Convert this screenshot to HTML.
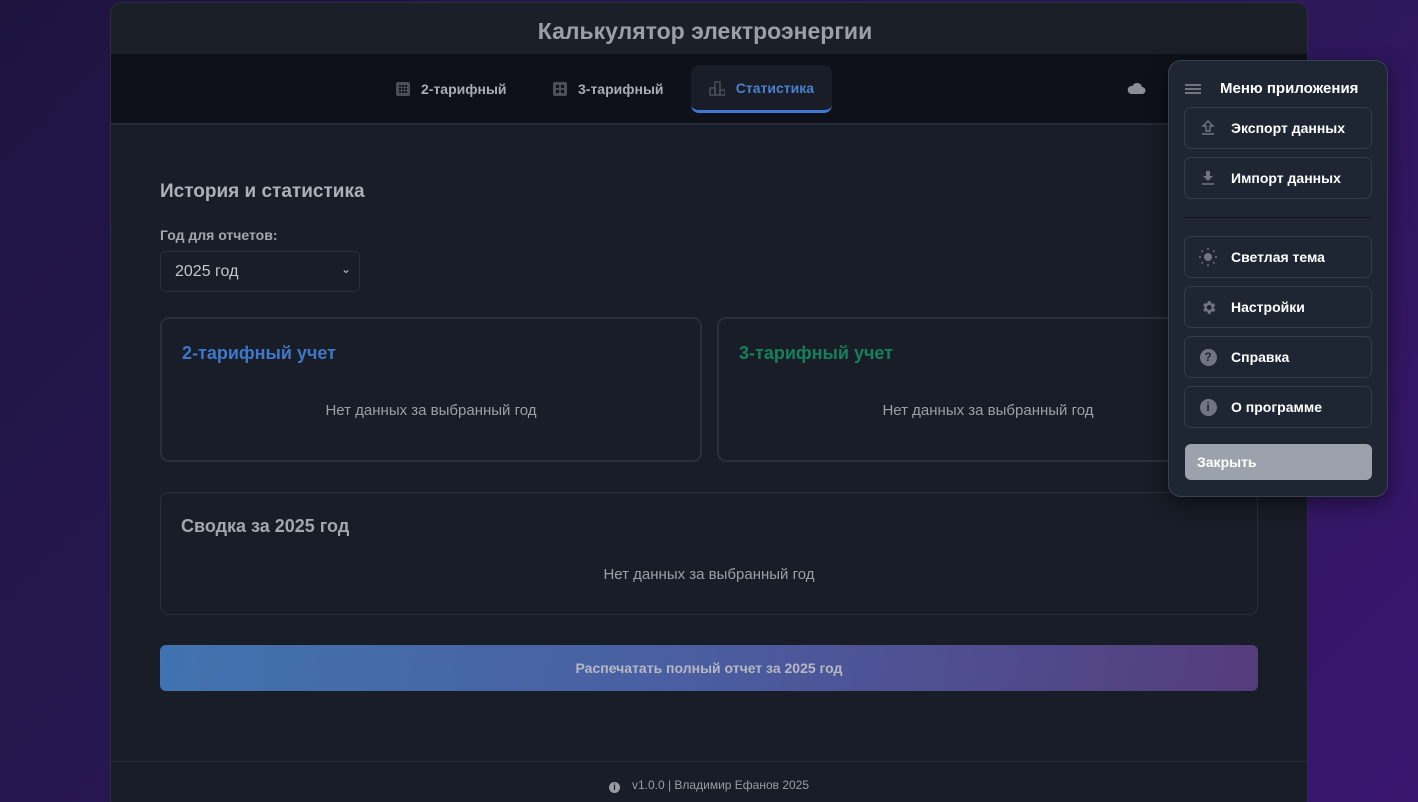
<!DOCTYPE html>
<html><head><meta charset="utf-8"><style>
*{box-sizing:border-box;margin:0;padding:0}
html,body{width:1418px;height:802px;overflow:hidden}
body{font-family:"Liberation Sans","Noto Sans CJK SC",sans-serif;background:linear-gradient(135deg,#1e1440 0%,#2a1856 50%,#3a1670 100%);position:relative}
.app{position:absolute;left:110px;top:2px;width:1198px;height:810px;background:#181d27;border:1px solid #2a303c;border-radius:12px;overflow:hidden}
.hdr{height:51px;background:#1b1f27;text-align:center;font-size:23px;font-weight:bold;color:#9ca0a6;line-height:56px;padding-right:8px}
.nav{height:71px;background:#0e1119;border-bottom:2px solid #252a35;position:relative}
.tab{position:absolute;top:11px;height:48px;display:flex;align-items:center;font-size:14px;font-weight:bold;color:#a9adb5}
.tab svg{margin-right:11px}
.act{background:#181d27;border-radius:8px;border-bottom:3px solid #3f7ad0;color:#4b80cf;padding:0 18px}
h2{position:absolute;left:49px;top:178px;font-size:19px;color:#aeb1b6}
.lbl{position:absolute;left:49px;top:224px;font-size:14px;font-weight:bold;color:#a4a7ac}
.sel{position:absolute;left:49px;top:248px;width:200px;height:41px;border:1px solid #2b313c;border-radius:5px;font-size:16px;color:#c4c7cb;padding:11px 14px;background:#181d27}
.sel span{position:absolute;right:8px;top:10px;font-size:12px}
.card{position:absolute;border:2px solid #2a303b;border-radius:9px}
.card h3{position:absolute;left:20px;top:24px;font-size:18px}
.nd{position:absolute;left:0;right:0;text-align:center;font-size:15px;color:#9ca0a6}
.btn{position:absolute;left:49px;top:642px;width:1098px;height:46px;border-radius:6px;background:linear-gradient(100deg,#4173b0,#4a5da0 50%,#553c7c);text-align:center;line-height:46px;font-size:14px;font-weight:bold;color:#b6b8c4}
.foot{position:absolute;left:0;right:0;top:758px;border-top:1px solid #262b36;text-align:center;padding-top:16px;font-size:12px;color:#9a9ea4}
.menu{position:absolute;left:1168px;top:60px;width:220px;height:437px;background:#1f2633;border:1px solid #3a4250;border-radius:13px;box-shadow:0 6px 20px rgba(0,0,0,.5)}
.mt{position:absolute;left:16px;top:19px;display:flex;align-items:center;font-size:15px;font-weight:bold;color:#fff}
.mi{position:absolute;left:15px;width:188px;height:42px;border:1px solid #343c4a;border-radius:7px;display:flex;align-items:center;font-size:14px;font-weight:bold;color:#fff}
.mi .ic{width:46px;display:flex;justify-content:center}
.cl{position:absolute;left:16px;top:383px;width:187px;height:36px;background:#9ca2ab;border-radius:6px;font-size:14px;font-weight:bold;color:#fff;line-height:36px;padding-left:12px}
</style></head><body>
<div class="app">
<div class="hdr">Калькулятор электроэнергии</div>
<div class="nav">
<div class="tab" style="left:285px"><svg width="14" height="14"><rect width="14" height="14" rx="2" fill="#4a4f5a"/><g fill="#0e1119"><rect x="3" y="3" width="2" height="2"/><rect x="6" y="3" width="2" height="2"/><rect x="9" y="3" width="2" height="2"/><rect x="3" y="6" width="2" height="2"/><rect x="6" y="6" width="2" height="2"/><rect x="9" y="6" width="2" height="2"/><rect x="3" y="9" width="2" height="2"/><rect x="6" y="9" width="2" height="2"/><rect x="9" y="9" width="2" height="2"/></g></svg>2-тарифный</div>
<div class="tab" style="left:442px"><svg width="14" height="14"><rect width="14" height="14" rx="2" fill="#4a4f5a"/><g fill="#0e1119"><rect x="3" y="3" width="3" height="3"/><rect x="8" y="3" width="3" height="3"/><rect x="3" y="8" width="3" height="3"/><rect x="8" y="8" width="3" height="3"/></g></svg>3-тарифный</div>
<div class="tab act" style="left:580px;width:141px"><svg width="18" height="16" fill="none" stroke="#4a4f5a" stroke-width="1.5"><rect x="1" y="8" width="5" height="7"/><rect x="6" y="2" width="5" height="13"/><rect x="11" y="10" width="5" height="5"/></svg>Статистика</div>
<svg style="position:absolute;left:1015px;top:27px" width="20" height="14"><path d="M5 13h11a3.5 3.5 0 0 0 0-7a5 5 0 0 0-9.5-1A4 4 0 0 0 5 13z" fill="#8a8e96"/></svg>
</div>
<h2>История и статистика</h2>
<div class="lbl">Год для отчетов:</div>
<div class="sel">2025 год<span>⌄</span></div>
<div class="card" style="left:49px;top:314px;width:542px;height:145px"><h3 style="color:#3f78c8">2-тарифный учет</h3><div class="nd" style="top:83px">Нет данных за выбранный год</div></div>
<div class="card" style="left:606px;top:314px;width:542px;height:145px"><h3 style="color:#17805a">3-тарифный учет</h3><div class="nd" style="top:83px">Нет данных за выбранный год</div></div>
<div class="card" style="left:49px;top:489px;width:1098px;height:123px;border-width:1px"><h3 style="color:#a4a7ac;top:23px">Сводка за 2025 год</h3><div class="nd" style="top:73px">Нет данных за выбранный год</div></div>
<div class="btn">Распечатать полный отчет за 2025 год</div>
<div class="foot"><span style="display:inline-block;width:11px;height:11px;border-radius:50%;background:#9a9ea4;color:#181d27;font-size:9px;line-height:11px;font-weight:bold;vertical-align:-1px;margin-right:12px">i</span>v1.0.0 | Владимир Ефанов 2025</div>
</div>
<div class="menu">
<div class="mt"><svg width="16" height="12" style="margin-right:19px"><g stroke="#8a909a" stroke-width="1.6"><path d="M0 2h16M0 6h16M0 10h16"/></g></svg>Меню приложения</div>
<div class="mi" style="top:46px"><div class="ic"><svg width="14" height="16"><path d="M7 1l-5 5h3v5h4V6h3z" fill="none" stroke="#6f7682" stroke-width="1.4"/><path d="M1 14h12" stroke="#6f7682" stroke-width="1.5"/></svg></div>Экспорт данных</div>
<div class="mi" style="top:96px"><div class="ic"><svg width="14" height="16"><path d="M5 1h4v5h3l-5 5-5-5h3z" fill="#6f7682"/><path d="M1 14h12" stroke="#6f7682" stroke-width="1.5"/></svg></div>Импорт данных</div>
<div style="position:absolute;left:15px;top:156px;width:188px;height:1px;background:#10141b"></div>
<div class="mi" style="top:175px"><div class="ic"><svg width="18" height="18"><circle cx="9" cy="9" r="4" fill="#6f7682"/><g stroke="#6f7682" stroke-width="1.4"><path d="M9 0v2M9 16v2M0 9h2M16 9h2M2.5 2.5l1.4 1.4M14.1 14.1l1.4 1.4M2.5 15.5l1.4-1.4M14.1 3.9l1.4-1.4"/></g></svg></div>Светлая тема</div>
<div class="mi" style="top:225px"><div class="ic"><svg width="17" height="17" viewBox="0 0 24 24"><path fill="#6f7682" d="M19.4 13a7.5 7.5 0 0 0 0-2l2.1-1.6-2-3.5-2.5 1a7 7 0 0 0-1.700-1L15 3h-4l-.4 2.7a7 7 0 0 0-1.7 1l-2.5-1-2 3.5L6.6 11a7.5 7.5 0 0 0 0 2l-2.1 1.600 2 3.5 2.5-1a7 7 0 0 0 1.7 1L11 21h4l.4-2.7a7 7 0 0 0 1.7-1l2.5 1 2-3.5zM13 15.5a3.5 3.5 0 1 1 0-7 3.5 3.5 0 0 1 0 7z"/></svg></div>Настройки</div>
<div class="mi" style="top:275px"><div class="ic"><span style="width:17px;height:17px;border-radius:50%;background:#6f7682;color:#1f2633;font-size:12px;font-weight:bold;text-align:center;line-height:17px">?</span></div>Справка</div>
<div class="mi" style="top:325px"><div class="ic"><span style="width:17px;height:17px;border-radius:50%;background:#6f7682;color:#1f2633;font-size:12px;font-weight:bold;text-align:center;line-height:17px">i</span></div>О программе</div>
<div class="cl">Закрыть</div>
</div>
</body></html>
